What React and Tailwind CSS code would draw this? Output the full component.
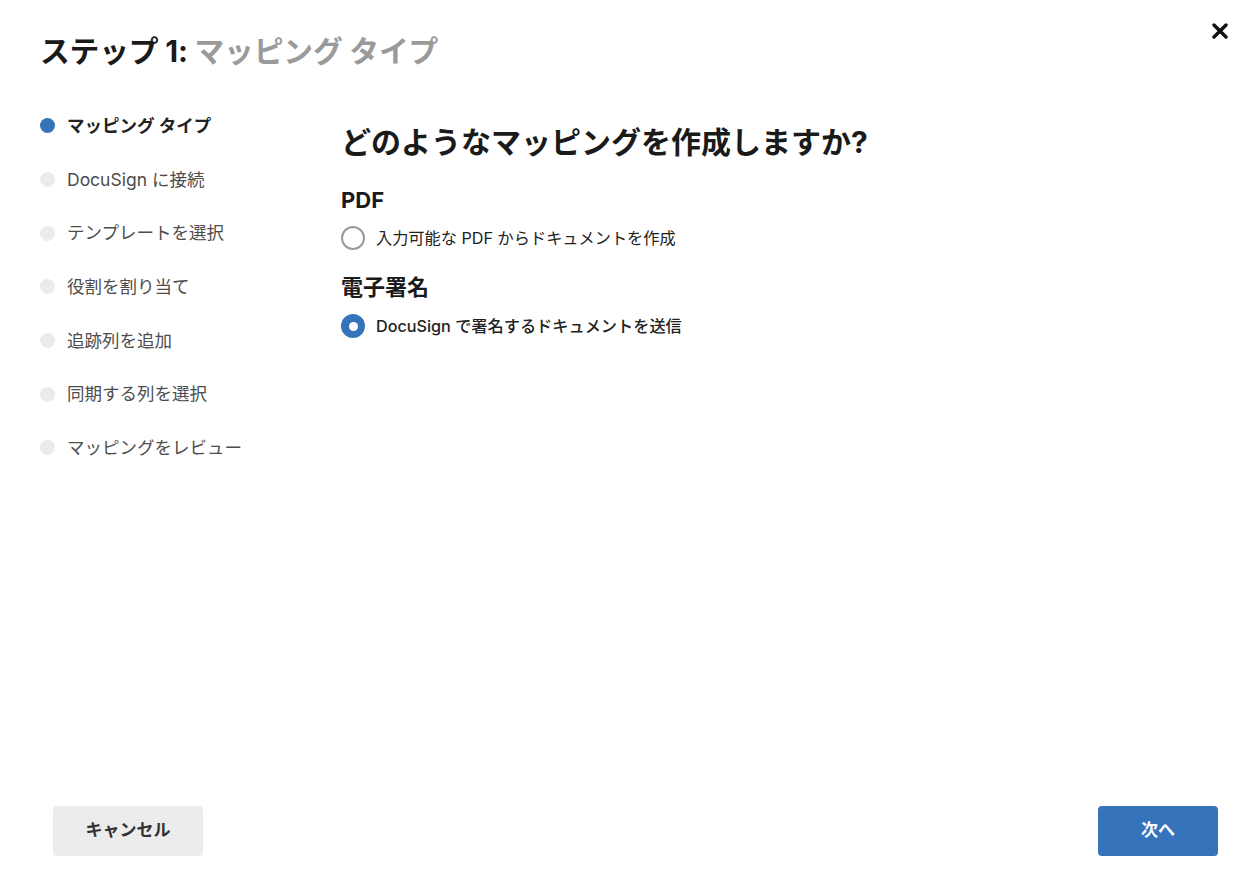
const steps = [
  'マッピング タイプ',
  'DocuSign に接続',
  'テンプレートを選択',
  '役割を割り当て',
  '追跡列を追加',
  '同期する列を選択',
  'マッピングをレビュー',
];

function Radio({ checked }) {
  if (checked) {
    return (
      <span className="flex h-6 w-6 shrink-0 items-center justify-center rounded-full bg-[#3574bb]">
        <span className="h-[9px] w-[9px] rounded-full bg-white" />
      </span>
    );
  }
  return <span className="h-6 w-6 shrink-0 rounded-full border-2 border-[#999999] bg-white" />;
}

export default function App() {
  return (
    <div
      className="flex h-[886px] w-full flex-col bg-white text-[#1a1a1a]"
      style={{ fontFamily: 'Inter, "Noto Sans CJK JP", sans-serif' }}
    >
      {/* Header */}
      <div className="flex items-start justify-between pl-10 pr-[24px] pt-[31px]">
        <h1 className="text-[29.8px] font-bold leading-[40px] tracking-[-0.2px]">
          ステップ 1: <span className="text-[#9a9a9a]">マッピング タイプ</span>
        </h1>
        <button className="mt-[-9px] flex h-[18px] w-[18px] items-center justify-center">
          <svg width="16" height="16" viewBox="0 0 16 16">
            <path d="M2 2 L14 14 M14 2 L2 14" stroke="#111" strokeWidth="3.4" strokeLinecap="round" />
          </svg>
        </button>
      </div>

      {/* Body */}
      <div className="flex flex-1">
        <nav className="mt-[28px] flex w-[341px] shrink-0 flex-col pl-10">
          {steps.map((s, i) => (
            <div key={s} className="flex h-[53.7px] items-center gap-3">
              <span
                className={`h-[15px] w-[15px] shrink-0 rounded-full ${i === 0 ? 'bg-[#3574bb]' : 'bg-[#ebebeb]'}`}
              />
              <span
                className={`text-[17.5px] leading-6 ${i === 0 ? 'font-bold text-[#222]' : 'text-[#4d4d4d]'}`}
              >
                {s}
              </span>
            </div>
          ))}
        </nav>

        <main className="flex flex-col pt-[51px]">
          <h2 className="text-[30px] font-bold leading-[40px]">どのようなマッピングを作成しますか?</h2>

          <h3 className="mt-[23px] text-[22px] font-bold leading-[30px]">PDF</h3>
          <label className="mt-[9px] flex h-7 items-center gap-[11px]">
            <Radio checked={false} />
            <span className="text-[16.2px] text-[#222]">入力可能な PDF からドキュメントを作成</span>
          </label>

          <h3 className="mt-[20px] text-[22px] font-bold leading-[30px]">電子署名</h3>
          <label className="mt-[10px] flex h-7 items-center gap-[11px]">
            <Radio checked />
            <span className="text-[16.2px] font-medium text-[#222]">DocuSign で署名するドキュメントを送信</span>
          </label>
        </main>
      </div>

      {/* Footer */}
      <div className="flex items-center justify-between pb-[30px] pl-[53px] pr-[35px]">
        <button className="h-[50px] w-[150px] rounded bg-[#ececec] text-[17px] font-bold text-[#333]">
          キャンセル
        </button>
        <button className="h-[50px] w-[120px] rounded bg-[#3574bb] text-[17px] font-bold text-white">
          次へ
        </button>
      </div>
    </div>
  );
}
